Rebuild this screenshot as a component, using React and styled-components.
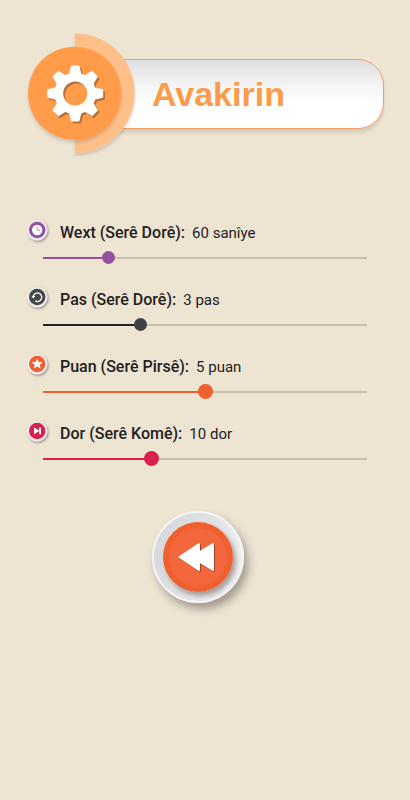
import React, { useState } from "react";
import styled, { createGlobalStyle } from "styled-components";

const GlobalStyle = createGlobalStyle`
  * {
    box-sizing: border-box;
  }
  body {
    margin: 0;
    background-color: #ede4d2;
    font-family: Roboto, "Liberation Sans", sans-serif;
    color: #23211e;
  }
`;

const Page = styled.main`
  min-height: 100vh;
  padding: 32px 26px 40px 24px;
`;

const Header = styled.header`
  display: flex;
  align-items: center;
`;

const BadgeSvg = styled.svg`
  flex: none;
  z-index: 1;
`;

const TitleBar = styled.div`
  flex: 1;
  display: flex;
  align-items: center;
  height: 70px;
  margin-left: -32px;
  padding-left: 47px;
  border: 1px solid #f0a066;
  border-radius: 0 26px 26px 0;
  background: linear-gradient(#dedee0, #f6f6f6 40%, #ffffff 65%);
  box-shadow: 0 4px 3px rgba(90, 80, 70, 0.14);
`;

const Title = styled.h1`
  margin: 0;
  font-family: "Liberation Sans", Arial, sans-serif;
  font-size: 34px;
  line-height: 40px;
  font-weight: 700;
  color: #fb9b4b;
`;

const Form = styled.form`
  display: flex;
  flex-direction: column;
  gap: 19px;
  margin-top: 62px;
  padding: 0 17px 0 1px;
`;

const Setting = styled.div`
  display: flex;
  flex-direction: column;
  gap: 7px;
`;

const SettingHead = styled.div`
  display: flex;
  align-items: center;
  gap: 11px;
  height: 24px;
`;

const IconSvg = styled.svg`
  flex: none;
  overflow: visible;
`;

const Label = styled.label`
  padding-top: 5px;
  font-size: 16px;
  line-height: 20px;
  font-weight: 500;
`;

const Value = styled.output`
  margin-left: 7px;
  font-size: 15px;
  font-weight: 400;
`;

const thumb = (p) => `
  width: ${p.$thumb}px;
  height: ${p.$thumb}px;
  border: none;
  border-radius: 50%;
  background: ${p.$thumbColor};
`;

const Slider = styled.input`
  --inset: ${(p) => Math.floor(p.$thumb / 2)}px;
  --track: calc(100% - 2 * var(--inset));
  appearance: none;
  height: 17px;
  margin: 0 calc(-1 * var(--inset)) 0 calc(18px - var(--inset));
  background:
    linear-gradient(${(p) => p.$color}, ${(p) => p.$color}) var(--inset) 8px /
      calc(var(--track) * var(--filled)) 2px no-repeat,
    linear-gradient(#c6bfae, #c6bfae) 50% 8px / var(--track) 2px no-repeat;
  cursor: pointer;

  &::-webkit-slider-runnable-track {
    height: 17px;
    background: none;
  }
  &::-webkit-slider-thumb {
    appearance: none;
    margin-top: ${(p) => (17 - p.$thumb) / 2}px;
    ${thumb}
  }
  &::-moz-range-thumb {
    ${thumb}
  }
`;

const BackButton = styled.button`
  align-self: center;
  display: flex;
  align-items: center;
  justify-content: center;
  width: 92px;
  height: 92px;
  margin: 25px 0 0 3px;
  padding: 0;
  border: 2px solid #f3f4f6;
  border-radius: 50%;
  background: linear-gradient(115deg, #d3d6da, #e0e2e4 50%, #f7f7f8);
  box-shadow: 4px 6px 9px rgba(70, 65, 60, 0.45);
  cursor: pointer;
`;

const ButtonFace = styled.span`
  display: flex;
  align-items: center;
  justify-content: center;
  width: 70px;
  height: 70px;
  border-radius: 50%;
  background: radial-gradient(circle, #f4663b 28px, #f0602f 30px);
  box-shadow: 3px 4px 5px rgba(80, 60, 50, 0.45);
`;

const GEAR_TEETH = [0, 45, 90, 135, 180, 225, 270, 315];

function Gear({ color }) {
  return (
    <g fill={color} stroke={color}>
      <circle r="16.4" fill="none" strokeWidth="8.8" />
      {GEAR_TEETH.map((angle) => (
        <path
          key={angle}
          d="M-5.8-19 L-3.7-27.5 H3.7 L5.8-19Z"
          strokeWidth="1"
          strokeLinejoin="round"
          transform={`rotate(${angle})`}
        />
      ))}
    </g>
  );
}

function GearBadge() {
  return (
    <BadgeSvg width="112" height="124" viewBox="0 0 112 124" aria-hidden="true">
      <defs>
        <filter id="badgeShadow" x="-20%" y="-20%" width="140%" height="140%">
          <feDropShadow dx="0" dy="3" stdDeviation="1.5" floodColor="#5a5046" floodOpacity="0.2" />
        </filter>
      </defs>
      <path d="M51 1.5 A59.7 59.7 0 0 1 51 121Z" fill="#ffbf88" filter="url(#badgeShadow)" />
      <circle cx="50.7" cy="61.3" r="46.6" fill="#ff9b48" filter="url(#badgeShadow)" />
      <g transform="translate(53 63.5)">
        <Gear color="#b77138" />
      </g>
      <g transform="translate(51.2 61.5)">
        <Gear color="#ffffff" />
      </g>
    </BadgeSvg>
  );
}

function SettingIcon({ color, children }) {
  return (
    <IconSvg width="24" height="24" viewBox="0 0 24 24" aria-hidden="true">
      <defs>
        <filter id="iconShadow" x="-30%" y="-30%" width="170%" height="170%">
          <feDropShadow dx="1" dy="1.2" stdDeviation="0.9" floodColor="#46413c" floodOpacity="0.55" />
        </filter>
      </defs>
      <circle cx="12.2" cy="12.2" r="10.3" fill="#ececef" filter="url(#iconShadow)" />
      <circle cx="12.2" cy="12" r="8.2" fill={color} />
      {children}
    </IconSvg>
  );
}

const SETTINGS = [
  {
    id: "wext",
    label: "Wext (Serê Dorê):",
    unit: "sanîye",
    max: 300,
    initial: 60,
    color: "#9650a0",
    thumb: 13,
    icon: (
      <>
        <circle cx="12.2" cy="12" r="5.2" fill="#ffffff" />
        <path d="M12.2 8.8 V12.2 H15" fill="none" stroke="#b58bbb" strokeWidth="1" />
      </>
    ),
  },
  {
    id: "pas",
    label: "Pas (Serê Dorê):",
    unit: "pas",
    max: 10,
    initial: 3,
    color: "#242428",
    thumbColor: "#404144",
    iconColor: "#45464a",
    thumb: 13,
    icon: (
      <>
        <path
          d="M8.2 11.4 A4.3 4.3 0 1 1 10.2 15.9"
          fill="none"
          stroke="#ffffff"
          strokeWidth="1.4"
        />
        <path d="M6.4 11 H10.4 L8.4 13.6Z" fill="#ffffff" />
      </>
    ),
  },
  {
    id: "puan",
    label: "Puan (Serê Pirsê):",
    unit: "puan",
    max: 10,
    initial: 5,
    color: "#f0602f",
    thumb: 15,
    icon: (
      <path
        d="M12.2 6.5 L13.8 10 L17.6 10.3 L14.7 12.8 L15.6 16.5 L12.2 14.5 L8.8 16.5 L9.7 12.8 L6.8 10.3 L10.6 10Z"
        fill="#ffffff"
      />
    ),
  },
  {
    id: "dor",
    label: "Dor (Serê Komê):",
    unit: "dor",
    max: 30,
    initial: 10,
    color: "#d9204c",
    thumb: 15,
    icon: (
      <path
        d="M9 8.4 L14.2 11.5 V8.4 H16 V15.2 H14.2 V12.1 L9 15.2Z"
        fill="#ffffff"
      />
    ),
  },
];

function SettingRow({ item }) {
  const [value, setValue] = useState(item.initial);

  return (
    <Setting>
      <SettingHead>
        <SettingIcon color={item.iconColor || item.color}>{item.icon}</SettingIcon>
        <Label htmlFor={item.id}>
          {item.label}
          <Value htmlFor={item.id}>
            {value} {item.unit}
          </Value>
        </Label>
      </SettingHead>
      <Slider
        id={item.id}
        type="range"
        min="0"
        max={item.max}
        value={value}
        onChange={(e) => setValue(Number(e.target.value))}
        $color={item.color}
        $thumbColor={item.thumbColor || item.color}
        $thumb={item.thumb}
        style={{ "--filled": value / item.max }}
      />
    </Setting>
  );
}

function App() {
  return (
    <Page>
      <GlobalStyle />
      <Header>
        <GearBadge />
        <TitleBar>
          <Title>Avakirin</Title>
        </TitleBar>
      </Header>
      <Form>
        {SETTINGS.map((item) => (
          <SettingRow key={item.id} item={item} />
        ))}
        <BackButton type="button" aria-label="Paş">
          <ButtonFace>
            <svg width="40" height="34" viewBox="0 0 40 34" aria-hidden="true">
              <g strokeWidth="2" strokeLinejoin="round">
                <path
                  d="M2.8 18.2 L22 5.2 V13.5 L36 5.2 V31 L22 23 V31Z"
                  fill="#9c3f20"
                  stroke="#9c3f20"
                />
                <path
                  d="M1.5 17 L21 4 V12.5 L35 4 V30 L21 21.5 V30Z"
                  fill="#ffffff"
                  stroke="#ffffff"
                />
              </g>
            </svg>
          </ButtonFace>
        </BackButton>
      </Form>
    </Page>
  );
}

export default App;
